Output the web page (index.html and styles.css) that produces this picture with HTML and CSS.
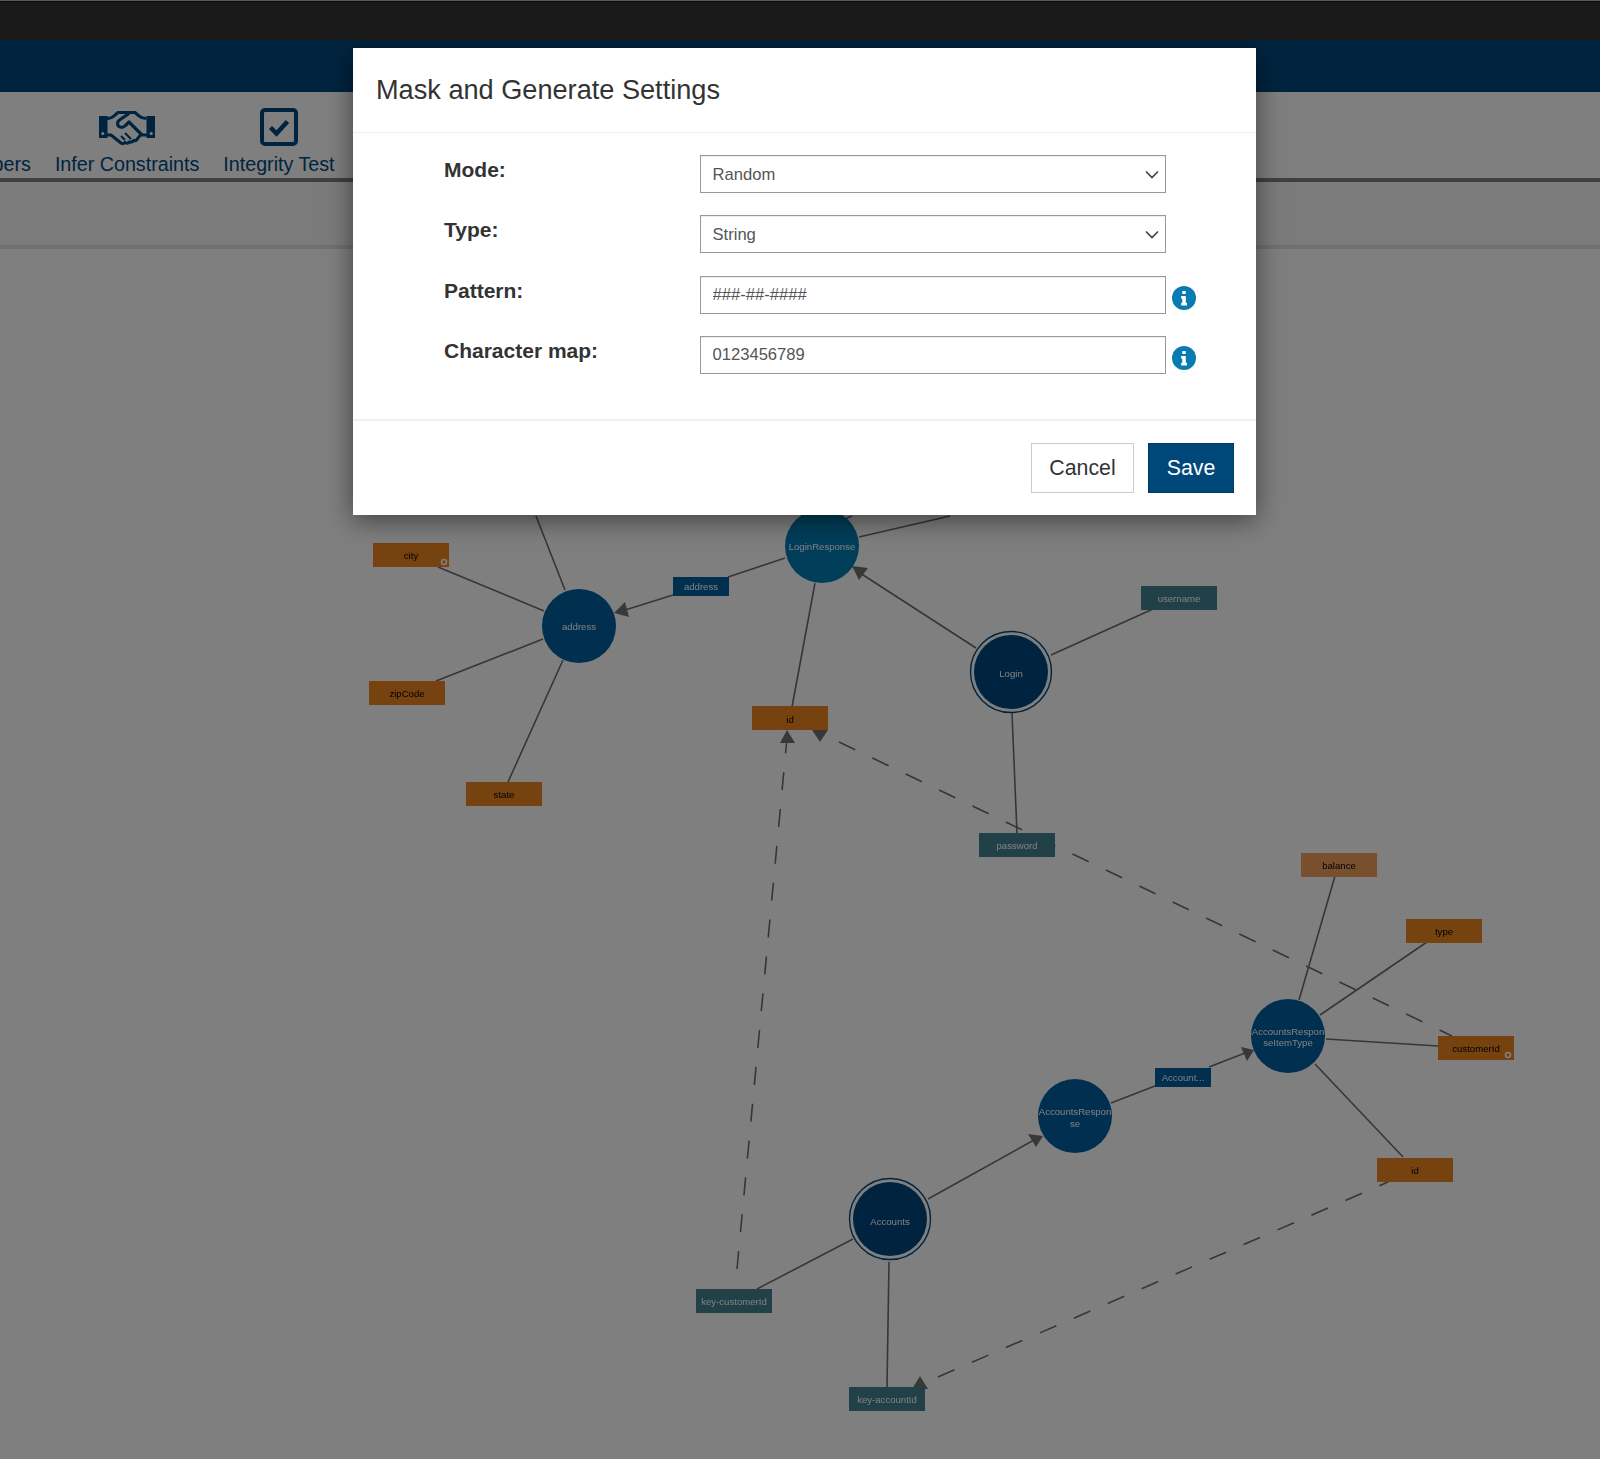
FILE: index.html
```html
<!DOCTYPE html>
<html lang="en">
<head>
<meta charset="utf-8">
<title>Mask and Generate Settings</title>
<link rel="stylesheet" href="styles.css">
</head>
<body>
<div class="chrome"></div>
<div class="app">
  <header class="brandbar"></header>
  <nav class="toolbar">
    <div class="tool tool-clipped"><span class="tool-icon"></span><span>Numbers</span></div>
    <div class="tool">
      <svg class="tool-icon" width="56" height="38" viewBox="0 0 56 38">
        <path class="ink" fill-rule="evenodd" d="M0 8h8.500v22H0z M2.200 25.500a1.600 1.600 0 1 0 3.200 0 1.600 1.600 0 0 0-3.200 0z M47.500 8H56v22h-8.500z M50.600 25.500a1.600 1.600 0 1 0 3.200 0 1.600 1.600 0 0 0-3.200 0z"/>
        <path class="hand hand-outer" d="M8 10.500c3.500 0 5.500-1 7.500-3l3.500-3h17l4 3.500c2 1.600 4 2.500 7.500 2.500 M8 27h4l10 8c1.500 1 3 .6 4-.6 1.500 1.200 3.500 1 4.500-.6 1.500.6 3.200.2 4-1.300 2 .4 3.600-.6 4.200-2.300l2.800-3.200H48"/>
        <path class="hand" d="M30 5.500l-9.500 6.500c-2.500 2-2.500 5-.5 6.500 2 1.300 5 .6 6.500-1l3.500-3.500 13 13"/>
        <path class="hand hand-thin" d="M26 25l6 6 M22 28l4 4"/>
      </svg>
      <span>Infer Constraints</span>
    </div>
    <div class="tool">
      <svg class="tool-icon" width="38" height="38" viewBox="0 0 38 38">
        <rect class="ink-line" x="2" y="2" width="34" height="34" rx="3"/>
        <path class="ink-check" d="M10.500 19.500l6 6 11-12"/>
      </svg>
      <span>Integrity Test</span>
    </div>
  </nav>
  <div class="subbar"></div>
  <main class="canvas">
    <svg class="graph" width="1600" height="1210" viewBox="0 249 1600 1210">
      <g class="edges">
        <line x1="536" y1="516" x2="565" y2="590"/>
        <line x1="438" y1="567" x2="544" y2="611"/>
        <line x1="436" y1="681" x2="543" y2="639"/>
        <line x1="508" y1="782" x2="563" y2="660"/>
        <line x1="785" y1="558" x2="728" y2="577"/>
        <line x1="673" y1="595" x2="622" y2="611"/>
        <line x1="859" y1="537" x2="950" y2="516"/>
        <line x1="838" y1="522" x2="852" y2="516"/>
        <line x1="815" y1="583" x2="792" y2="707"/>
        <line x1="976" y1="648" x2="860" y2="573"/>
        <line x1="1051" y1="655" x2="1153" y2="609"/>
        <line x1="1012" y1="713" x2="1017" y2="833"/>
        <line x1="1335" y1="876" x2="1299" y2="1000"/>
        <line x1="1427" y1="942" x2="1320" y2="1015"/>
        <line x1="1326" y1="1039" x2="1438" y2="1046"/>
        <line x1="1315" y1="1064" x2="1403" y2="1157"/>
        <line x1="1111" y1="1103" x2="1155" y2="1086"/>
        <line x1="1209" y1="1067" x2="1245" y2="1053"/>
        <line x1="928" y1="1199" x2="1034" y2="1140"/>
        <line x1="853" y1="1239" x2="757" y2="1289"/>
        <line x1="889" y1="1262" x2="887" y2="1387"/>
      </g>
      <g class="edges dashed">
        <line x1="839" y1="742" x2="1452" y2="1036"/>
        <line x1="737" y1="1269" x2="787" y2="738"/>
        <line x1="938" y1="1377" x2="1388" y2="1182"/>
      </g>
      <g class="arrows">
        <polygon points="614,613 625,602 629,617"/>
        <polygon points="852,566 868,568 859,580"/>
        <polygon points="1254,1050 1241,1047 1247,1061"/>
        <polygon points="1043,1136 1028,1134 1036,1147"/>
        <polygon points="787,730 780,743 795,743"/>
        <polygon points="820,742 812,730 828,730"/>
        <polygon points="920,1376 912,1389 928,1389"/>
      </g>

      <g class="attr attr-key">
        <rect x="979" y="833" width="76" height="24"/><text x="1017" y="849">password</text>
        <rect x="1141" y="586" width="76" height="24"/><text x="1179" y="602">username</text>
        <rect x="696" y="1289" width="76" height="24"/><text x="734" y="1305">key-customerId</text>
        <rect x="849" y="1387" width="76" height="24"/><text x="887" y="1403">key-accountId</text>
      </g>
      <g class="attr attr-field">
        <rect x="373" y="543" width="76" height="24"/><text x="411" y="559">city</text>
        <rect x="369" y="681" width="76" height="24"/><text x="407" y="697">zipCode</text>
        <rect x="466" y="782" width="76" height="24"/><text x="504" y="798">state</text>
        <rect x="752" y="706" width="76" height="24"/><text x="790" y="723">id</text>
        <rect x="1406" y="919" width="76" height="24"/><text x="1444" y="935">type</text>
        <rect x="1438" y="1036" width="76" height="24"/><text x="1476" y="1052">customerId</text>
        <rect x="1377" y="1158" width="76" height="24"/><text x="1415" y="1174">id</text>
      </g>
      <g class="attr attr-soft">
        <rect x="1301" y="853" width="76" height="24"/><text x="1339" y="869">balance</text>
      </g>
      <g class="attr attr-rel">
        <rect x="673" y="577" width="56" height="19"/><text x="701" y="590">address</text>
        <rect x="1155" y="1068" width="56" height="19"/><text x="1183" y="1081">Account...</text>
      </g>
      <g class="badge">
        <circle cx="444" cy="562" r="2.500"/>
        <circle cx="1508" cy="1055" r="2.500"/>
      </g>

      <g class="node node-mid">
        <circle cx="579" cy="626" r="37"/><text x="579" y="630">address</text>
        <circle cx="1288" cy="1036" r="37"/><text x="1288" y="1035">AccountsRespon</text><text x="1288" y="1046">seItemType</text>
        <circle cx="1075" cy="1116" r="37"/><text x="1075" y="1115">AccountsRespon</text><text x="1075" y="1127">se</text>
      </g>
      <g class="node node-light">
        <circle cx="822" cy="546" r="37"/><text x="822" y="550">LoginResponse</text>
      </g>
      <g class="node node-root">
        <circle class="ring" cx="1011" cy="672" r="40.500"/>
        <circle cx="1011" cy="672" r="37"/><text x="1011" y="677">Login</text>
        <circle class="ring" cx="890" cy="1219" r="40.500"/>
        <circle cx="890" cy="1219" r="37"/><text x="890" y="1225">Accounts</text>
      </g>
    </svg>
  </main>

  <div class="overlay">
    <form class="modal">
      <div class="modal-header"><h2 class="modal-title">Mask and Generate Settings</h2></div>
      <div class="modal-body">
        <div class="field">
          <label class="field-label">Mode:</label>
          <div class="control">
            <select class="input"><option>Random</option></select>
            <svg class="chevron" width="14" height="9" viewBox="0 0 14 9"><path d="M1 1.500l6 6 6-6"/></svg>
          </div>
        </div>
        <div class="field">
          <label class="field-label">Type:</label>
          <div class="control">
            <select class="input"><option>String</option></select>
            <svg class="chevron" width="14" height="9" viewBox="0 0 14 9"><path d="M1 1.500l6 6 6-6"/></svg>
          </div>
        </div>
        <div class="field">
          <label class="field-label">Pattern:</label>
          <div class="control"><input class="input" value="###-##-####"></div>
          <svg class="info" width="24" height="24" viewBox="0 0 24 24"><circle cx="12" cy="12" r="12"/><path d="M10.300 5h3.400v3h-3.400zM9.200 10h4.600v6.800h1.200V19.500H9.200v-2.700h1.100v-4.100H9.200z"/></svg>
        </div>
        <div class="field">
          <label class="field-label">Character map:</label>
          <div class="control"><input class="input" value="0123456789"></div>
          <svg class="info" width="24" height="24" viewBox="0 0 24 24"><circle cx="12" cy="12" r="12"/><path d="M10.300 5h3.400v3h-3.400zM9.200 10h4.600v6.800h1.200V19.500H9.200v-2.700h1.100v-4.100H9.200z"/></svg>
        </div>
      </div>
      <div class="modal-footer">
        <button type="button" class="btn btn-cancel">Cancel</button>
        <button type="button" class="btn btn-save">Save</button>
      </div>
    </form>
  </div>
</div>
</body>
</html>
```

FILE: styles.css
```css
* { box-sizing: border-box; }

html, body {
  margin: 0;
  height: 100%;
  background: #fff;
  font-family: "Liberation Sans", Arial, sans-serif;
  overflow: hidden;
}

.chrome {
  height: 40px;
  background: #1a1a1a;
  border-top: 1px solid #5a5a5a;
  box-shadow: inset 0 1px 0 #0c0c0c;
}

.app {
  position: relative;
  height: 1419px;
  overflow: hidden;
}

.brandbar {
  height: 52px;
  background: #00487e;
}

.toolbar {
  height: 90px;
  display: flex;
  gap: 24px;
  align-items: flex-end;
  padding-bottom: 1px;
  background: #fff;
  border-bottom: 4px solid #808080;
  color: #00487e;
  font-size: 19.700px;
}

.tool {
  display: flex;
  flex-direction: column;
  align-items: center;
  gap: 5px;
  white-space: nowrap;
  line-height: 26px;
}

.tool-clipped { margin-left: -49px; }

.tool-icon { display: block; height: 38px; }

.ink { fill: #00487e; }

.hand {
  fill: none;
  stroke: #00487e;
  stroke-width: 3.200;
  stroke-linejoin: round;
}

.hand-outer { stroke-width: 3; }

.hand-thin { stroke-width: 2; }

.ink-line { fill: none; stroke: #00487e; stroke-width: 4; }

.ink-check { fill: none; stroke: #00487e; stroke-width: 4.500; }

.subbar {
  height: 67px;
  background: #f6f6f6;
  border-bottom: 4px solid #e0e0e0;
}

.canvas { height: 1210px; background: #fff; }

.graph { display: block; filter: blur(.6px); }

.edges line { stroke: #6c6c6c; stroke-width: 1.600; }

.dashed line { stroke-dasharray: 18 19; }

.arrows polygon { fill: #707070; }

.attr text, .node text {
  font-size: 9.600px;
  text-anchor: middle;
}

.attr-key rect { fill: #44808f; }
.attr-key text { fill: #fff; }
.attr-field rect { fill: #ec8420; }
.attr-field text { fill: #000; }
.attr-soft rect { fill: #f0a05a; }
.attr-soft text { fill: #000; }
.attr-rel rect { fill: #005e9e; }
.attr-rel text { fill: #fff; }

.badge circle { fill: #ec8420; stroke: #fff; stroke-width: 1.600; }

.node text { fill: #fff; }
.node-mid circle { fill: #005e9e; }
.node-light circle { fill: #007cb4; }
.node-root circle { fill: #00487e; }
.node-root .ring { fill: #fff; stroke: #00487e; stroke-width: 1.400; }

.overlay {
  position: absolute;
  inset: 0;
  padding: 8px 0 0 353px;
  background: rgba(0, 0, 0, .5);
}

.modal {
  width: 903px;
  background: #fff;
  box-shadow: 0 5px 25px rgba(0, 0, 0, .5);
  color: #333;
}

.modal-header {
  height: 85px;
  padding: 0 23px;
  display: flex;
  align-items: center;
  border-bottom: 1px solid #eee;
}

.modal-title {
  margin: 0;
  font-size: 27.150px;
  font-weight: 400;
  line-height: 1;
  color: #333;
}

.modal-body {
  height: 288px;
  padding: 22px 0 0 91px;
  display: flex;
  flex-direction: column;
  gap: 22.300px;
  border-bottom: 2px solid #f0f0f0;
}

.field {
  display: flex;
  align-items: flex-start;
  height: 38px;
}

.field-label {
  width: 256px;
  font-size: 21px;
  font-weight: 700;
  line-height: 30px;
}

.control { position: relative; width: 466px; height: 38px; }

.input {
  display: block;
  width: 100%;
  height: 38px;
  padding: 0 11.500px;
  border: 1px solid #999;
  border-radius: 0;
  background: #fff;
  appearance: none;
  box-shadow: inset 0 1px 1px rgba(0, 0, 0, .075);
  color: #555;
  font-family: inherit;
  font-size: 16.600px;
}

.chevron {
  position: absolute;
  right: 7px;
  top: 15px;
  pointer-events: none;
}

.chevron path { fill: none; stroke: #444; stroke-width: 1.700; }

.info { margin: 10px 0 0 6px; }
.info circle { fill: #0a7bb0; }
.info path { fill: #fff; }

.modal-footer {
  display: flex;
  justify-content: flex-end;
  gap: 14px;
  padding: 22px 22px 22px;
}

.btn {
  height: 50px;
  border: 1px solid #ccc;
  border-radius: 0;
  font-family: inherit;
  font-size: 21.300px;
  padding: 0;
}

.btn-cancel { width: 103px; background: #fff; color: #333; }

.btn-save { width: 86px; background: #00487a; border-color: #003a66; color: #fff; }
```
